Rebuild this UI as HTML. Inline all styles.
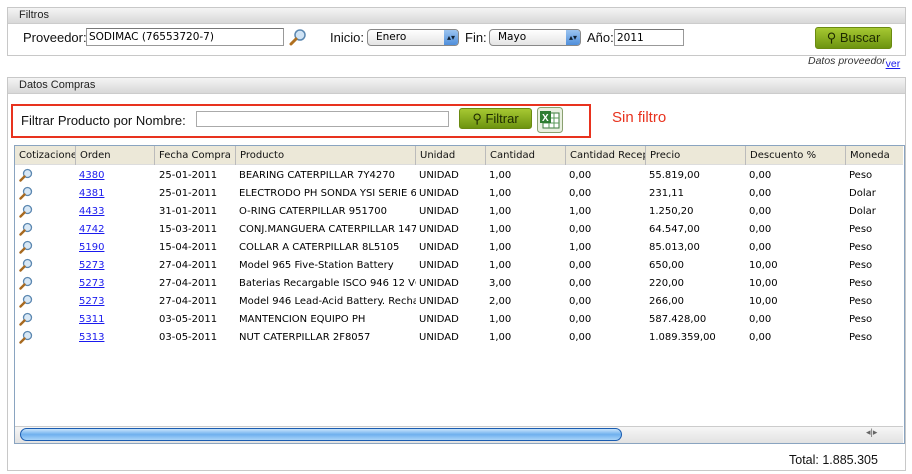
<!DOCTYPE html>
<html><head><style>
body{margin:0;width:912px;height:474px;background:#fff;font-family:"Liberation Sans",sans-serif;position:relative;overflow:hidden}
.a{position:absolute;white-space:nowrap}
.panel{position:absolute;border:1px solid #c8c8c8;background:#fff}
.ph{height:15px;background:linear-gradient(#f4f4f4,#d8d8d8);border-bottom:1px solid #ccc;font-size:11px;padding-left:11px;line-height:15px;color:#222}
.inp{position:absolute;border:1px solid #999;border-top-color:#777;background:#fff;font-family:"DejaVu Sans",sans-serif;font-size:10.5px;line-height:16px;padding-left:2px;box-sizing:border-box}
.sel{position:absolute;height:17px;border:1px solid #888;border-radius:4px;background:linear-gradient(#fff,#e4e4e4);font-family:"DejaVu Sans",sans-serif;font-size:10.5px;line-height:15px;padding-left:8px;box-sizing:border-box}
.sel b{position:absolute;right:0;top:0;width:14px;height:15px;background:linear-gradient(#9cc4f0,#4f8fdc);border-radius:0 3px 3px 0;color:#123;font-size:8px;text-align:center;line-height:15px}
.btn{position:absolute;border:1px solid #6a8a10;border-radius:3px;background:linear-gradient(#a6c832,#6d9410);font-size:13px;color:#1e2a00;box-sizing:border-box;text-align:center}
.lbl{font-size:13px;color:#111}
.hd{position:absolute;top:146px;height:19px;background:#ece8d8;border-bottom:1px solid #ddd;font-family:"DejaVu Sans",sans-serif;font-size:10px;line-height:19px;color:#111;box-sizing:border-box}
.hd span{position:absolute;top:0;height:19px;padding-left:4px;border-left:1px solid #bbb;overflow:hidden;white-space:nowrap}
.r{position:absolute;font-family:"DejaVu Sans",sans-serif;font-size:10px;color:#000;line-height:14px}
.r a{color:#1a1aee;text-decoration:underline}
.mg{position:absolute;width:14px;height:14px}
</style></head><body>

<div class="panel" style="left:7px;top:7px;width:897px;height:47px"><div class="ph">Filtros</div></div>
<div class="a lbl" style="left:23px;top:30px">Proveedor:</div>
<div class="inp" style="left:86px;top:28px;width:198px;height:18px">SODIMAC (76553720-7)</div>
<svg class="a" style="left:289px;top:28px" width="18" height="18" viewBox="0 0 18 18"><circle cx="11" cy="7" r="5" fill="#cfe3f5" stroke="#5b87b0" stroke-width="1.5"/><path d="M7 11 L2 16" stroke="#b07020" stroke-width="3" stroke-linecap="round"/></svg>
<div class="a lbl" style="left:330px;top:30px">Inicio:</div>
<div class="sel" style="left:367px;top:29px;width:92px">Enero<b>▴▾</b></div>
<div class="a lbl" style="left:465px;top:30px">Fin:</div>
<div class="sel" style="left:489px;top:29px;width:92px">Mayo<b>▴▾</b></div>
<div class="a lbl" style="left:587px;top:30px">Año:</div>
<div class="inp" style="left:614px;top:29px;width:70px;height:17px">2011</div>
<div class="btn" style="left:815px;top:27px;width:77px;height:22px;line-height:20px">⚲ Buscar</div>
<div class="a" style="left:808px;top:55px;font-size:10.5px;font-style:italic;color:#333">Datos proveedor<span style="color:#1a1aee;text-decoration:underline;font-style:normal;position:relative;top:3px">ver</span></div>

<div class="panel" style="left:7px;top:77px;width:897px;height:392px"><div class="ph">Datos Compras</div></div>
<div class="a" style="left:11px;top:104px;width:576px;height:30px;border:2px solid #e8321e"></div>
<div class="a lbl" style="left:21px;top:113px">Filtrar Producto por Nombre:</div>
<div class="inp" style="left:196px;top:111px;width:253px;height:16px;border-color:#aaa"></div>
<div class="btn" style="left:459px;top:108px;width:73px;height:21px;line-height:19px">⚲ Filtrar</div>
<svg class="a" style="left:537px;top:107px" width="26" height="26" viewBox="0 0 26 26"><rect x="0.5" y="0.5" width="25" height="25" rx="3" fill="#e8f0e0" stroke="#8aa070"/><rect x="6" y="6" width="16" height="15" fill="#fff" stroke="#3a7a3a"/><path d="M6 11h16M6 16h16M12 6v15M17 6v15" stroke="#5a9a5a"/><rect x="3" y="4" width="11" height="12" fill="#2e7d32"/><text x="5" y="14" font-size="10" font-weight="bold" fill="#fff" font-family="Liberation Sans">X</text></svg>
<div class="a" style="left:612px;top:109px;font-size:15px;color:#e8321e">Sin filtro</div>

<div class="a" style="left:14px;top:145px;width:889px;height:297px;border:1px solid #8aa4c0"></div>
<div class="hd" style="left:15px;width:888px">
<span style="left:0;border:none;width:56px">Cotizaciones</span><span style="left:60px">Orden</span><span style="left:139px">Fecha Compra</span><span style="left:220px">Producto</span><span style="left:400px">Unidad</span><span style="left:470px">Cantidad</span><span style="left:550px;width:75px">Cantidad Recepcion</span><span style="left:630px">Precio</span><span style="left:730px">Descuento %</span><span style="left:830px">Moneda</span>
</div>

<div id="rows"></div>
<script>
var d=[["4380","25-01-2011","BEARING CATERPILLAR 7Y4270","1,00","0,00","55.819,00","0,00","Peso"],
["4381","25-01-2011","ELECTRODO PH SONDA YSI SERIE 60","1,00","0,00","231,11","0,00","Dolar"],
["4433","31-01-2011","O-RING CATERPILLAR 951700","1,00","1,00","1.250,20","0,00","Dolar"],
["4742","15-03-2011","CONJ.MANGUERA CATERPILLAR 147","1,00","0,00","64.547,00","0,00","Peso"],
["5190","15-04-2011","COLLAR A CATERPILLAR 8L5105","1,00","1,00","85.013,00","0,00","Peso"],
["5273","27-04-2011","Model 965 Five-Station Battery","1,00","0,00","650,00","10,00","Peso"],
["5273","27-04-2011","Baterias Recargable ISCO 946 12 VC","3,00","0,00","220,00","10,00","Peso"],
["5273","27-04-2011","Model 946 Lead-Acid Battery. Recharg","2,00","0,00","266,00","10,00","Peso"],
["5311","03-05-2011","MANTENCION EQUIPO PH","1,00","0,00","587.428,00","0,00","Peso"],
["5313","03-05-2011","NUT CATERPILLAR 2F8057","1,00","0,00","1.089.359,00","0,00","Peso"]];
var h="";
d.forEach(function(r,i){var y=168+i*18;
h+='<svg class="mg" style="left:19px;top:'+(y)+'px" viewBox="0 0 14 14"><circle cx="8.5" cy="5.5" r="4" fill="#d8e8f6" stroke="#5b87b0" stroke-width="1.3"/><path d="M5.5 8.5 L1.5 12.5" stroke="#a86a20" stroke-width="2.4" stroke-linecap="round"/></svg>';
h+='<div class="r" style="left:79px;top:'+(y+1)+'px"><a>'+r[0]+'</a></div>';
h+='<div class="r" style="left:159px;top:'+(y+1)+'px">'+r[1]+'</div>';
h+='<div class="r" style="left:239px;top:'+(y+1)+'px;width:177px;overflow:hidden;white-space:nowrap">'+r[2]+'</div>';
h+='<div class="r" style="left:419px;top:'+(y+1)+'px">UNIDAD</div>';
h+='<div class="r" style="left:489px;top:'+(y+1)+'px">'+r[3]+'</div>';
h+='<div class="r" style="left:569px;top:'+(y+1)+'px">'+r[4]+'</div>';
h+='<div class="r" style="left:649px;top:'+(y+1)+'px">'+r[5]+'</div>';
h+='<div class="r" style="left:749px;top:'+(y+1)+'px">'+r[6]+'</div>';
h+='<div class="r" style="left:849px;top:'+(y+1)+'px">'+r[7]+'</div>';
});
document.getElementById('rows').innerHTML=h;
</script>

<div class="a" style="left:15px;top:426px;width:888px;height:16px;background:linear-gradient(#f6f6f6,#e2e2e2);border-top:1px solid #ccc"></div>
<div class="a" style="left:20px;top:428px;width:600px;height:11px;border:1px solid #1a5cb0;border-radius:7px;background:linear-gradient(#c8e4fb,#6fb0ee 50%,#a9d4f8)"></div>
<div class="a" style="left:866px;top:427px;font-size:9px;color:#666">◂|▸</div>
<div class="a" style="left:789px;top:453px;font-size:12.5px;color:#111">Total: 1.885.305</div>
</body></html>
